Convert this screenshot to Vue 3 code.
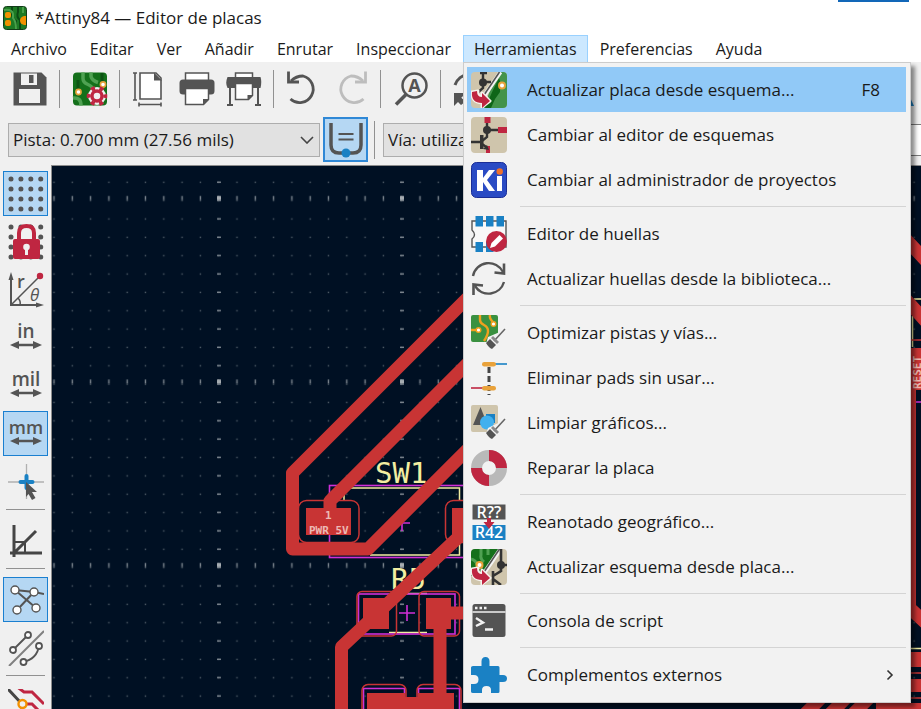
<script setup>
const menus = [
  'Archivo', 'Editar', 'Ver', 'Añadir', 'Enrutar', 'Inspeccionar',
  'Herramientas', 'Preferencias', 'Ayuda',
]
const openMenu = 'Herramientas'

const toolGroups = [
  [{ icon: 'save', label: 'Guardar' }],
  [{ icon: 'board-setup', label: 'Configuración de la placa' }],
  [
    { icon: 'page', label: 'Ajustes de página' },
    { icon: 'print', label: 'Imprimir' },
    { icon: 'plot', label: 'Trazar' },
  ],
  [
    { icon: 'undo', label: 'Deshacer' },
    { icon: 'redo', label: 'Rehacer', disabled: true },
  ],
  [{ icon: 'find', label: 'Buscar' }],
  [{ icon: 'refresh', label: 'Refrescar' }],
]

const sideGroups = [
  [
    { icon: 'grid', label: 'Mostrar cuadrícula', on: true },
    { icon: 'grid-lock', label: 'Bloqueo de cuadrícula' },
    { icon: 'polar', label: 'Coordenadas polares' },
    { icon: 'unit-in', label: 'Pulgadas' },
    { icon: 'unit-mil', label: 'Milésimas' },
    { icon: 'unit-mm', label: 'Milímetros', on: true },
    { icon: 'cursor', label: 'Forma del cursor' },
  ],
  [{ icon: 'angle', label: 'Limitar ángulos' }],
  [
    { icon: 'ratsnest', label: 'Mostrar conexiones', on: true },
    { icon: 'ratsnest-curved', label: 'Conexiones curvas' },
  ],
  [{ icon: 'layers', label: 'Atenuar capas' }],
]

const toolsMenu = [
  [
    { icon: 'pcb-from-sch', text: 'Actualizar placa desde esquema...', key: 'F8', active: true },
    { icon: 'schematic', text: 'Cambiar al editor de esquemas' },
    { icon: 'kicad', text: 'Cambiar al administrador de proyectos' },
  ],
  [
    { icon: 'footprint', text: 'Editor de huellas' },
    { icon: 'update', text: 'Actualizar huellas desde la biblioteca...' },
  ],
  [
    { icon: 'clean-tracks', text: 'Optimizar pistas y vías...' },
    { icon: 'unused-pads', text: 'Eliminar pads sin usar...' },
    { icon: 'clean-graphics', text: 'Limpiar gráficos...' },
    { icon: 'repair', text: 'Reparar la placa' },
  ],
  [
    { icon: 'annotate', text: 'Reanotado geográfico...' },
    { icon: 'sch-from-pcb', text: 'Actualizar esquema desde placa...' },
  ],
  [{ icon: 'console', text: 'Consola de script' }],
  [{ icon: 'plugin', text: 'Complementos externos', sub: true }],
]
</script>

<template>
  <div class="app">
    <svg class="sprite" aria-hidden="true">
      <symbol id="logo" viewBox="0 0 24 24">
        <rect x="0.5" y="0.5" width="23" height="23" rx="3" fill="#1d7a24" stroke="#123c18" />
        <path d="M9 1v7q0 4 4 7v8M15 1v5q-2 5 2 8v9" fill="none" stroke="#0c4a14" stroke-width="2" />
        <path d="M1 4q8-1 9 4v4q3 3 3 11M20 1v6" fill="none" stroke="#49a04b" stroke-width="2" />
        <rect x="2" y="6" width="6" height="6" rx="2" fill="#f29100" />
        <rect x="2" y="14" width="6" height="6" rx="2" fill="#f29100" />
        <path d="M23 10h-2q-4 1-4 4.500t4 4.500h2z" fill="#f29100" />
      </symbol>

      <symbol id="save" viewBox="0 0 36 36">
        <path d="M1.500 1.500h28l5 5v28h-33z" fill="#545454" />
        <rect x="9" y="2.500" width="16" height="11.500" fill="#f0f0f0" />
        <rect x="17" y="4" width="4.500" height="8" fill="#545454" />
        <rect x="7" y="18" width="21" height="14" fill="#f0f0f0" />
      </symbol>
      <symbol id="board-setup" viewBox="0 0 36 36">
        <rect x="1" y="1.500" width="34" height="33" rx="4" fill="#14701b" />
        <path d="M11 1.500v6q0 4 5 6t6 7M19 1.500v4q1 4 7 6M1 27q8-1 8 7.500" fill="none" stroke="#4fa152" stroke-width="3.500" />
        <path d="M6 21v-12M30 13v-11" stroke="#0d5414" stroke-width="3" />
        <circle cx="6.500" cy="21" r="2.600" fill="#fff" stroke="#e8a33a" stroke-width="1.600" />
        <circle cx="31" cy="13.500" r="2.600" fill="#fff" stroke="#e8a33a" stroke-width="1.600" />
        <circle cx="25" cy="25" r="9" fill="#f2eef0" />
        <circle cx="25" cy="25" r="8.300" fill="none" stroke="#bf2641" stroke-width="4" stroke-dasharray="4 4.690" stroke-dashoffset="2" />
        <circle cx="25" cy="25" r="5" fill="none" stroke="#bf2641" stroke-width="3.400" />
      </symbol>
      <symbol id="page" viewBox="0 0 36 36">
        <path d="M8 2h16l5 5v21H8z" fill="#fff" stroke="#545454" stroke-width="1.600" />
        <path d="M22 1.500v8h8z" fill="#545454" />
        <path d="M3 2v27M1 2h4M1 29h4M7 33.500h22M7 31.500v4M29 31.500v4" fill="none" stroke="#545454" stroke-width="1.600" />
      </symbol>
      <symbol id="print" viewBox="0 0 36 36">
        <rect x="6.500" y="2" width="23" height="8" fill="#fff" stroke="#545454" stroke-width="1.500" />
        <rect x="0.500" y="8.500" width="35" height="15" rx="3.500" fill="#545454" />
        <path d="M6.500 17.500h23v11l-5 5h-18z" fill="#fff" stroke="#545454" stroke-width="1.500" />
        <path d="M24 33.500v-5.500h6z" fill="#545454" />
      </symbol>
      <symbol id="plot" viewBox="0 0 36 36">
        <rect x="9.500" y="2" width="17" height="6" fill="#fff" stroke="#545454" stroke-width="1.500" />
        <path d="M1.500 6h33q1.500 4 0 11h-33q-2.500-5 0-11z" fill="#545454" />
        <path d="M9.500 12.500h17v12l-4 4h-13z" fill="#fff" stroke="#545454" stroke-width="1.500" />
        <path d="M4 16v18M32 16v18M1 34h6M29 34h6" stroke="#545454" stroke-width="2" />
        <path d="M21.500 29v-5h5.500z" fill="#545454" />
      </symbol>
      <symbol id="undo" viewBox="0 0 36 36">
        <path d="M5 10Q10 5 17 5A13.500 13.500 0 1 1 4.500 28" fill="none" stroke="#545454" stroke-width="2.800" />
        <path d="M2.500 0.500v10.500h10.500" fill="none" stroke="#545454" stroke-width="2.800" />
      </symbol>
      <symbol id="redo" viewBox="0 0 36 36">
        <path d="M30 10Q25 5 18 5A13.500 13.500 0 1 0 30.500 28" fill="none" stroke="#bdbdbd" stroke-width="2.800" />
        <path d="M32.500 0.500v10.500h-10.500" fill="none" stroke="#bdbdbd" stroke-width="2.800" />
      </symbol>
      <symbol id="find" viewBox="0 0 36 36">
        <circle cx="21.500" cy="14.500" r="12" fill="none" stroke="#545454" stroke-width="2.500" />
        <path d="M13 23.500L3 33.500" stroke="#545454" stroke-width="3.500" />
        <text x="21.500" y="21" class="glyph" font-size="18" font-weight="700" text-anchor="middle" fill="#545454">A</text>
      </symbol>
      <symbol id="refresh" viewBox="0 0 36 36">
        <path d="M2 14A16 16 0 0 1 31 11M34 21A16 16 0 0 1 5 25" fill="none" stroke="#545454" stroke-width="3" />
        <path d="M1 35v-13h12l-5 5 4 4-4 3-3-3z" fill="#545454" />
        <path d="M35 2v12h-11z" fill="#545454" />
      </symbol>
      <symbol id="flag" viewBox="0 0 36 36">
        <path d="M18 0L34 35H2z" fill="#1a81c4" />
      </symbol>
      <symbol id="track-width" viewBox="0 0 42 42">
        <path d="M6 4v22q0 8 8 8h14q8 0 8-8V4" fill="none" stroke="#545454" stroke-width="3.500" />
        <path d="M13.500 15h15M13.500 20.500h15" stroke="#545454" stroke-width="1.800" />
        <circle cx="21" cy="34" r="4.500" fill="#1a81c4" />
      </symbol>

      <symbol id="grid" viewBox="0 0 36 36">
        <path d="M3 3h31M3 13h31M3 23h31M3 33h31" stroke="#545454" stroke-width="5" stroke-linecap="round" stroke-dasharray="0.010 9.900" />
      </symbol>
      <symbol id="grid-lock" viewBox="0 0 36 36">
        <path d="M3 3h31M3 13h31M3 23h31M3 33h31" stroke="#545454" stroke-width="5" stroke-linecap="round" stroke-dasharray="0.010 9.900" />
        <path d="M11 17V9q0-7 7.500-7t7.500 7v8" fill="#f0f0f0" stroke="#bf2641" stroke-width="4" />
        <rect x="5" y="15" width="27" height="20" rx="2" fill="#bf2641" />
        <circle cx="18.500" cy="23" r="3.300" fill="#f0f0f0" />
        <path d="M17 24h3v7h-3z" fill="#f0f0f0" />
      </symbol>
      <symbol id="polar" viewBox="0 0 36 36">
        <path d="M3 34V5M2 33h29" stroke="#545454" stroke-width="2" />
        <path d="M3 0l2.500 8h-5zM36 33l-8-2.500v5z" fill="#545454" />
        <path d="M3 33L32 4M10 26q3 3 2 7" fill="none" stroke="#545454" stroke-width="1.500" />
        <circle cx="32" cy="4" r="3.200" fill="#bf2641" />
        <text x="9" y="16" class="glyph" font-size="18" font-weight="600" fill="#545454">r</text>
        <text x="22" y="29" class="glyph" font-size="17" font-style="italic" fill="#545454">θ</text>
      </symbol>
      <symbol id="unit-arrow" viewBox="0 0 36 36">
        <path d="M7 25h22" stroke="#545454" stroke-width="2.500" />
        <path d="M2 25l9-4v8zM34 25l-9-4v8z" fill="#545454" />
      </symbol>
      <symbol id="unit-in" viewBox="0 0 36 36">
        <text x="18" y="18" class="glyph" font-size="19" font-weight="600" text-anchor="middle" fill="#545454">in</text>
        <use href="#unit-arrow" width="36" height="36" />
      </symbol>
      <symbol id="unit-mil" viewBox="0 0 36 36">
        <text x="18" y="18" class="glyph" font-size="19" font-weight="600" text-anchor="middle" fill="#545454">mil</text>
        <use href="#unit-arrow" width="36" height="36" />
      </symbol>
      <symbol id="unit-mm" viewBox="0 0 36 36">
        <text x="18" y="18" class="glyph" font-size="18" font-weight="600" text-anchor="middle" fill="#545454">mm</text>
        <use href="#unit-arrow" width="36" height="36" />
      </symbol>
      <symbol id="cursor" viewBox="0 0 36 36">
        <path d="M18.500 0v35M0 18h36" stroke="#b0b0b0" stroke-width="1.300" />
        <path d="M12.500 18h12M18.500 12v12" stroke="#1a81c4" stroke-width="4" stroke-linecap="round" />
        <path d="M18 18l11 10h-5l3.500 6-3.500 2-3.500-6-2.500 3z" fill="#545454" />
      </symbol>
      <symbol id="angle" viewBox="0 0 36 36">
        <path d="M6 2v32M2 30h32M6 30L28 8" stroke="#454545" stroke-width="3" fill="none" />
        <path d="M6 19h11v11" fill="none" stroke="#454545" stroke-width="2" />
      </symbol>
      <symbol id="ratsnest" viewBox="0 0 36 36">
        <path d="M7 8l19 2 10 2M7 8l21 18M26 10L9 28" fill="none" stroke="#545454" stroke-width="2" />
        <g fill="#fff" stroke="#545454" stroke-width="1.400">
          <circle cx="7" cy="8" r="4" /><circle cx="26" cy="10" r="4" />
          <circle cx="9" cy="28" r="4" /><circle cx="28" cy="26" r="4" />
        </g>
      </symbol>
      <symbol id="ratsnest-curved" viewBox="0 0 36 36">
        <path d="M1 36L36 1" stroke="#808080" stroke-width="2" />
        <path d="M5 20L20 5M31 16q-2 13-16 16" fill="none" stroke="#545454" stroke-width="1.800" />
        <g fill="#fff" stroke="#545454" stroke-width="1.800">
          <circle cx="5" cy="20" r="3" /><circle cx="20" cy="5" r="3" />
          <circle cx="31" cy="16" r="3" /><circle cx="15.500" cy="32" r="3" />
        </g>
      </symbol>
      <symbol id="layers" viewBox="0 0 36 36">
        <path d="M0 0l14 15v12l14 9" fill="none" stroke="#454545" stroke-width="3" />
        <path d="M8-3l8 6h8l12 12M17 15h7l12 12" fill="none" stroke="#bf2641" stroke-width="3" />
        <circle cx="14.500" cy="15" r="4" fill="#f0f0f0" stroke="#f29100" stroke-width="2.400" />
      </symbol>

      <symbol id="pcb-from-sch" viewBox="0 0 36 36">
        <rect width="36" height="36" rx="4" fill="#cfc5ac" />
        <path d="M29 0h3q4 0 4 4v28q0 4-4 4H13l5-15z" fill="#43934a" />
        <path d="M28 6l-6 12-8 18h6l4-9 5-7V9z" fill="#0f6618" />
        <path d="M29.500 0L11 27" stroke="#f4f4f4" stroke-width="4" />
        <path d="M28.500 0L13 23" stroke="#545454" stroke-width="1.600" />
        <path d="M12 0v16l-8 7M12 10h8M9 1h7" fill="none" stroke="#333" stroke-width="2.400" />
        <circle cx="12" cy="10.500" r="4" fill="#333" />
        <circle cx="31" cy="13.500" r="3" fill="#fff" stroke="#e9a23b" stroke-width="2" />
        <use href="#swap-arrow" width="36" height="36" />
      </symbol>
      <symbol id="swap-arrow" viewBox="0 0 36 36">
        <path d="M1 20q-1 10 10 11v4l8-6-8-8v4q-5-1-4-6z" fill="#bf2641" stroke="#f6f3ee" stroke-width="3" stroke-linejoin="round" />
        <path d="M1 20q-1 11 10 11v5l8-7-8-8v4q-5 0-5-6z" fill="#bf2641" />
      </symbol>
      <symbol id="schematic" viewBox="0 0 36 36">
        <rect width="36" height="36" rx="4" fill="#cfc5ac" />
        <path d="M16 4v10M16 13h12M16 13v7l-5 4M0 25h11M11 27l7 5" fill="none" stroke="#333" stroke-width="2.400" />
        <path d="M9 18v14h3.500V18z" fill="#333" />
        <circle cx="16" cy="13" r="4" fill="#333" />
        <path d="M13.500 0h6v6h-6zM27 10h9v6h-9zM15 29h4v7h-4z" fill="#bf2641" />
        <path d="M18 33l-6-1 4-4z" fill="#333" />
      </symbol>
      <symbol id="kicad" viewBox="0 0 36 36">
        <rect x="0.500" y="0.500" width="35" height="35" rx="5" fill="#2a4bc4" stroke="#1b2e96" />
        <path d="M6 8h6v8l6-8h6l-8 10 8 11h-6l-6-9v9H6z" fill="#fff" />
        <path d="M26 14h5v15h-5z" fill="#fff" />
        <circle cx="28.700" cy="9.500" r="3.200" fill="#f0702a" />
      </symbol>
      <symbol id="footprint" viewBox="0 0 36 36">
        <path d="M1 5h34v26H1v-8q5-4 0-9z" fill="#f8f8f8" stroke="#545454" stroke-width="1.400" />
        <path d="M4.500 0h7.500v10.500H4.500zM15 0h7.500v10.500H15zM25.500 0h7.500v10.500h-7.500zM4.500 26h7.500v10H4.500zM15 26h7.500v10H15z" fill="#1a81c4" />
        <circle cx="25.500" cy="25.500" r="10.500" fill="#bf2641" />
        <path d="M19 32l1.500-5 8-8 3.500 3.500-8 8z" fill="#fff" />
      </symbol>
      <symbol id="update" viewBox="0 0 36 36">
        <path d="M2 15A16 16 0 0 1 32 11M33 21A16 16 0 0 1 4 25" fill="none" stroke="#545454" stroke-width="2.400" />
        <path d="M33 2.500v10l-9.500-1M2.500 34v-10.500l9.500 1" fill="none" stroke="#545454" stroke-width="2.600" />
      </symbol>
      <symbol id="broom" viewBox="0 0 36 36">
        <path d="M34 14L23 26" stroke="#666" stroke-width="1.600" />
        <path d="M22 21l6 6-2 2-6-6z" fill="#8a8a8a" />
        <path d="M19 24l6 6-4 4q-3-1-6-6z" fill="#545454" />
      </symbol>
      <symbol id="clean-tracks" viewBox="0 0 36 36">
        <rect y="0" width="27" height="27" rx="2" fill="#3a9140" />
        <path d="M9 0v5q0 3 4 5t4 6-4 10M19 0q-1 4 4 8M0 15h7" fill="none" stroke="#f0a01e" stroke-width="2.400" />
        <circle cx="22.500" cy="9" r="2.300" fill="#fff" stroke="#f0a01e" stroke-width="1.400" />
        <circle cx="7.500" cy="15" r="2.300" fill="#fff" stroke="#f0a01e" stroke-width="1.400" />
        <path d="M36 14L21 36h-8l4-14z" fill="#f2f2f2" />
        <use href="#broom" width="36" height="36" />
      </symbol>
      <symbol id="unused-pads" viewBox="0 0 36 36">
        <path d="M24 4h12" stroke="#1a81c4" stroke-width="1.600" />
        <path d="M0 28h12" stroke="#bf2641" stroke-width="1.600" />
        <path d="M18 7v28" stroke="#454545" stroke-width="3" stroke-dasharray="6 3" />
        <rect x="11" y="2" width="14" height="4.500" rx="2.200" fill="#e9a23b" />
        <rect x="11" y="26" width="14" height="4.500" rx="2.200" fill="#e9a23b" />
      </symbol>
      <symbol id="clean-graphics" viewBox="0 0 36 36">
        <rect width="27" height="27" rx="2" fill="#cfc5ac" />
        <rect x="15" y="9" width="9" height="9" fill="#1a81c4" />
        <path d="M9.500 2l7 18H2z" fill="#545454" />
        <circle cx="16" cy="17.500" r="7" fill="#41b0ee" />
        <path d="M36 14L21 36h-8l4-13 6-3z" fill="#f2f2f2" />
        <use href="#broom" width="36" height="36" />
      </symbol>
      <symbol id="repair" viewBox="0 0 36 36">
        <circle cx="18" cy="18" r="12.500" fill="none" stroke="#b9b9b9" stroke-width="11" />
        <path d="M18 5.500A12.500 12.500 0 0 1 30.500 18M18 30.500A12.500 12.500 0 0 1 5.500 18" fill="none" stroke="#bf2641" stroke-width="11" />
      </symbol>
      <symbol id="annotate" viewBox="0 0 36 36">
        <rect x="1.500" y="0.500" width="33" height="15" fill="#545454" />
        <rect x="1.500" y="21" width="33" height="15" fill="#1a81c4" />
        <text x="18" y="14" class="glyph" font-size="16" font-weight="600" text-anchor="middle" fill="#fff">R??</text>
        <text x="18" y="34" class="glyph" font-size="16" font-weight="600" text-anchor="middle" fill="#fff">R42</text>
        <path d="M16 14h4v4h3.500L18 25l-5.500-7H16z" fill="#bf2641" />
      </symbol>
      <symbol id="sch-from-pcb" viewBox="0 0 36 36">
        <rect width="36" height="36" rx="4" fill="#cfc5ac" />
        <path d="M4 0h25L12 27H0V4q0-4 4-4z" fill="#14701b" />
        <path d="M10 0v6q-1 4 3 7M0 10q5 1 6 6M17 0v6" fill="none" stroke="#4fa152" stroke-width="3" />
        <path d="M29.500 0L11 27" stroke="#f4f4f4" stroke-width="4" />
        <path d="M28.500 0L13 23" stroke="#545454" stroke-width="1.600" />
        <path d="M30 0v22l-8 5M30 16h6M22 22v14M22 30l8 6" fill="none" stroke="#333" stroke-width="2.600" />
        <circle cx="30" cy="16" r="4" fill="#333" />
        <circle cx="8.500" cy="16" r="3" fill="#fff" stroke="#e9a23b" stroke-width="2" />
        <use href="#swap-arrow" width="36" height="36" />
      </symbol>
      <symbol id="console" viewBox="0 0 36 36">
        <rect x="1.500" y="1" width="33" height="33" rx="2.500" fill="#545454" />
        <path d="M1.500 9h33" stroke="#f2f2f2" stroke-width="1.600" />
        <path d="M4 5h2.500M8.500 5h2.500M13 5h2.500" stroke="#f2f2f2" stroke-width="2.400" />
        <path d="M5 15l7 4.500L5 23M14 26.500h8" fill="none" stroke="#f2f2f2" stroke-width="2.400" />
      </symbol>
      <symbol id="plugin" viewBox="0 0 36 36">
        <path d="M2 9h8.500V4.500q0-4.500 4-4.500t4 4.500V9H27q1.500 0 1.500 1.500V18h3.500q4 0 4 3.500t-4 3.500h-3.500v9.500q0 1.500-1.500 1.500h-7v-3q0-4-4.500-4t-4.500 4v3H2q-2 0-2-1.500V27h3q4.500 0 4.500-4.500T3 18H0v-7.500Q0 9 2 9z" fill="#1a81c4" />
      </symbol>
    </svg>

    <header class="titlebar">
      <svg class="logo" aria-hidden="true"><use href="#logo" /></svg>
      <h1>*Attiny84 — Editor de placas</h1>
      <span class="caption-accent"></span>
    </header>

    <nav class="menubar">
      <div v-for="name in menus" :key="name" class="menu-slot">
        <button type="button" class="menu-title" :class="{ open: name === openMenu }">{{ name }}</button>
        <div v-if="name === openMenu" class="dropdown" role="menu">
          <div v-for="(group, g) in toolsMenu" :key="g" class="menu-group">
            <button
              v-for="item in group"
              :key="item.text"
              type="button"
              role="menuitem"
              class="menu-item"
              :class="{ active: item.active }"
            >
              <svg class="icon" aria-hidden="true"><use :href="'#' + item.icon" /></svg>
              <span class="item-text">{{ item.text }}</span>
              <span v-if="item.key" class="item-key">{{ item.key }}</span>
              <svg v-if="item.sub" class="chevron-right" viewBox="0 0 8 12" aria-hidden="true">
                <path d="M1.500 1.500L6 6l-4.500 4.500" fill="none" stroke="#333" stroke-width="1.600" />
              </svg>
            </button>
          </div>
        </div>
      </div>
    </nav>

    <div class="toolbar">
      <div v-for="(group, g) in toolGroups" :key="g" class="tool-group">
        <button
          v-for="tool in group"
          :key="tool.icon"
          type="button"
          class="tool"
          :aria-label="tool.label"
          :disabled="tool.disabled"
        >
          <svg class="icon" aria-hidden="true"><use :href="'#' + tool.icon" /></svg>
        </button>
      </div>
      <button type="button" class="tool last" aria-label="Capas">
        <svg class="icon" aria-hidden="true"><use href="#flag" /></svg>
      </button>
    </div>

    <div class="options">
      <div class="combo">
        <select aria-label="Anchura de pista">
          <option>Pista: 0.700 mm (27.56 mils)</option>
        </select>
        <svg class="chevron-down" viewBox="0 0 14 8" aria-hidden="true">
          <path d="M1 1l6 6 6-6" fill="none" stroke="#444" stroke-width="1.600" />
        </svg>
      </div>
      <button type="button" class="track-toggle" aria-label="Anchura automática">
        <svg aria-hidden="true"><use href="#track-width" /></svg>
      </button>
      <span class="rule"></span>
      <div class="combo">
        <select aria-label="Tamaño de vía">
          <option>Vía: utilizar tamaños de la clase de red</option>
        </select>
      </div>
      <input class="layer-box" type="text" aria-label="Capa" />
    </div>

    <main class="workspace">
      <aside class="sidebar">
        <div v-for="(group, g) in sideGroups" :key="g" class="side-group">
          <button
            v-for="tool in group"
            :key="tool.icon"
            type="button"
            class="side-tool"
            :class="{ on: tool.on }"
            :aria-label="tool.label"
          >
            <svg class="icon" aria-hidden="true"><use :href="'#' + tool.icon" /></svg>
          </button>
        </div>
      </aside>

      <div class="board">
        <svg class="canvas" role="img" aria-label="Placa">
          <defs>
            <pattern id="dots" width="18.300" height="18.350" x="-7.100" y="7.200" patternUnits="userSpaceOnUse">
              <rect x="8.400" y="8.400" width="1.400" height="1.400" fill="#4f5b66" />
            </pattern>
            <pattern id="row-ticks" width="18.300" height="183.500" x="-7.100" y="-60" patternUnits="userSpaceOnUse">
              <rect x="8.400" y="90" width="1.400" height="4" fill="#7b848d" />
            </pattern>
            <pattern id="col-ticks" width="183" height="18.350" x="75" y="7.200" patternUnits="userSpaceOnUse">
              <rect x="90" y="8.300" width="4" height="1.400" fill="#7b848d" />
            </pattern>
            <pattern id="majors" width="183" height="183.500" x="75" y="-60" patternUnits="userSpaceOnUse">
              <rect x="90" y="90" width="4" height="4" fill="#a6acb1" />
            </pattern>
          </defs>
          <rect width="100%" height="100%" fill="#001023" />
          <rect width="100%" height="100%" fill="url(#dots)" />
          <rect width="100%" height="100%" fill="url(#row-ticks)" />
          <rect width="100%" height="100%" fill="url(#col-ticks)" />
          <rect width="100%" height="100%" fill="url(#majors)" />

          <g transform="translate(-52 -166)">
            <g class="silk-text" fill="#f2eda1" font-size="29">
              <text x="375" y="483">SW1</text>
              <text x="391" y="589">R5</text>
            </g>
            <g fill="none" stroke="#f2eda1" stroke-width="1.500">
              <path d="M344 500v-12h115.500v12M459.500 543v12H370M395 593.500h32M389 632.500h38" />
              <path d="M921 299h-7M912.500 316v31M911 648.500h10" />
            </g>
            <g fill="none" stroke="#d02fd6" stroke-width="1.600">
              <rect x="329.500" y="485.500" width="160" height="72" />
              <rect x="358.500" y="594" width="96.500" height="40" />
              <path d="M394 523h16M402 515v16M399 613h16M407 605v16" />
              <path d="M363.500 709v-20.500h41V709M418.500 709v-20.500h41V709M916 402h5" />
            </g>
            <g fill="none" stroke="#c83434" stroke-width="1.500">
              <rect x="298.500" y="500.500" width="60.500" height="42" rx="8" />
              <rect x="445.500" y="500.500" width="60" height="42" rx="8" />
              <rect x="357" y="591.500" width="39.500" height="44.500" rx="5" />
              <rect x="419" y="591.500" width="40.500" height="44.500" rx="5" />
              <rect x="362" y="684.500" width="44" height="50" rx="6" />
              <rect x="417" y="684.500" width="44" height="50" rx="6" />
              <path d="M911 340h10M911 673h10M911 698h10" />
            </g>
            <g fill="none" stroke="#c83434" stroke-width="13" stroke-linejoin="round">
              <path d="M480 285.500L292.500 473v76H368L480 437" />
              <path d="M330 515v-14L480 351" />
              <path d="M480 517L341.500 647v70" />
              <path d="M440 615v90M440 613h40" />
              <path d="M900 233l30 32M900 293l30 33M900 599l30 28" />
              <path d="M795 724l30-30M820 724l30-30M843 724l30-30" />
            </g>
            <g fill="#c83434">
              <rect x="306" y="508" width="45" height="27" />
              <rect x="452" y="508" width="45" height="27" />
              <rect x="363" y="598" width="26" height="31" />
              <rect x="426" y="598" width="25" height="31" />
              <path d="M367 693h38v4h13v-4h36v20h-87z" />
              <path d="M910 348h11v42h-5v218h-6zM910 652h11v15h-11zM910 679h11v13h-11zM876 703h45v6h-45z" />
            </g>
            <g class="pad-text" fill="#edb9b5" font-size="11" font-weight="700">
              <text x="325" y="519">1</text>
              <text x="309" y="534">PWR 5V</text>
              <text transform="translate(921 389) rotate(-90)">RESET</text>
            </g>
          </g>
        </svg>
      </div>
    </main>
  </div>
</template>

<style>
body {
  overflow: hidden;
}
</style>

<style scoped>
.app {
  display: flex;
  flex-direction: column;
  height: 100vh;
  background: #f0f0f0;
  color: #1a1a1a;
  font-family: "Open Sans", "Noto Sans", sans-serif;
  font-size: 17px;
}
.app *,
.app *::before {
  box-sizing: border-box;
}
button,
select,
input {
  margin: 0;
  padding: 0;
  border: 0;
  border-radius: 0;
  background: none;
  color: inherit;
  font: inherit;
}
svg {
  display: block;
}
.sprite {
  display: none;
}
.glyph {
  font-family: "Open Sans", "Noto Sans", sans-serif;
}
.icon {
  width: 36px;
  height: 36px;
  flex: none;
}

.titlebar {
  display: flex;
  align-items: center;
  gap: 8px;
  height: 35px;
  padding-left: 3px;
  background: #fff;
}
.logo {
  width: 24px;
  height: 24px;
}
h1 {
  margin: 0;
  font-size: 17px;
  font-weight: 400;
}
.caption-accent {
  align-self: flex-start;
  width: 71px;
  height: 2px;
  margin-left: auto;
  margin-right: 12px;
  background: #1267b8;
}

.menubar {
  display: flex;
  gap: 1px;
  height: 27px;
  background: #fff;
  font-size: 16px;
}
.menu-slot {
  position: relative;
}
.menu-title {
  height: 28px;
  padding: 0 10px;
  border: 1px solid transparent;
  line-height: 26px;
}
.menu-title.open {
  background: #cce8ff;
  border-color: #99d1ff;
}
.dropdown {
  position: absolute;
  z-index: 5;
  top: 27px;
  left: 0;
  width: 448px;
  padding: 4px 4px 5px 3px;
  border: 1px solid #ccc;
  background: #f2f2f2;
  box-shadow: 4px 4px 4px rgba(0, 0, 0, 0.45);
  font-size: 17px;
}
.menu-group + .menu-group::before {
  content: "";
  display: block;
  height: 1px;
  margin: 4px 0 4px 53px;
  background: #d4d4d4;
}
.menu-item {
  display: flex;
  align-items: center;
  width: 100%;
  height: 45px;
  padding: 0 26px 0 4px;
  text-align: left;
}
.menu-item.active {
  background: #91c9f7;
}
.item-text {
  flex: 1;
  padding-left: 20px;
  white-space: nowrap;
}
.chevron-right {
  width: 8px;
  height: 12px;
  margin-right: -14px;
}

.toolbar {
  display: flex;
  align-items: center;
  height: 54px;
  padding-left: 6px;
}
.tool-group {
  display: flex;
  align-items: center;
}
.tool-group + .tool-group::before {
  content: "";
  width: 1px;
  height: 38px;
  margin: 0 6px;
  background: #919191;
}
.tool {
  display: grid;
  place-items: center;
  width: 47px;
  height: 45px;
}
.tool.last {
  margin-left: auto;
}

.options {
  display: flex;
  align-items: center;
  height: 49px;
  padding: 0 0 2px 8px;
}
.combo {
  display: grid;
  align-items: center;
  width: 312px;
}
.combo > * {
  grid-area: 1 / 1;
}
select {
  width: 100%;
  height: 34px;
  padding: 0 4px;
  border: 1px solid #adadad;
  background: #e1e1e1;
  appearance: none;
}
.chevron-down {
  width: 14px;
  height: 8px;
  margin-right: 6px;
  justify-self: end;
  pointer-events: none;
}
.track-toggle {
  display: grid;
  place-items: center;
  width: 45px;
  height: 45px;
  margin-left: 3px;
  border: 2px solid #2f88d6;
  background: #b5d7f3;
}
.track-toggle svg {
  width: 42px;
  height: 42px;
}
.rule {
  width: 1px;
  height: 38px;
  margin: 0 8px 0 6px;
  background: #919191;
}
.layer-box {
  flex: 1;
  min-width: 0;
  height: 32px;
  margin-left: 12px;
  border: 1px solid #7a7a7a;
  border-right: 0;
  background: #fff;
}

.workspace {
  display: flex;
  flex: 1;
  min-height: 0;
}
.sidebar {
  display: flex;
  flex-direction: column;
  flex: none;
  width: 52px;
  padding: 6px 3px 0;
  border-right: 1px solid #8c8c8c;
  overflow: hidden;
}
.side-group {
  display: flex;
  flex-direction: column;
  flex: none;
  gap: 3px;
}
.side-group + .side-group::before {
  content: "";
  height: 1px;
  margin: 5px 3px;
  background: #919191;
}
.side-tool {
  display: grid;
  place-items: center;
  width: 45px;
  height: 45px;
  border: 1px solid transparent;
}
.side-tool.on {
  border-color: #1a7fd0;
  background: #b5d7f3;
}
.board {
  flex: 1;
  min-width: 0;
  border-top: 1px solid #8c8c8c;
  background: #001023;
}
.canvas {
  width: 100%;
  height: 100%;
}
.silk-text,
.pad-text {
  font-family: "DejaVu Sans Mono", monospace;
}
</style>
